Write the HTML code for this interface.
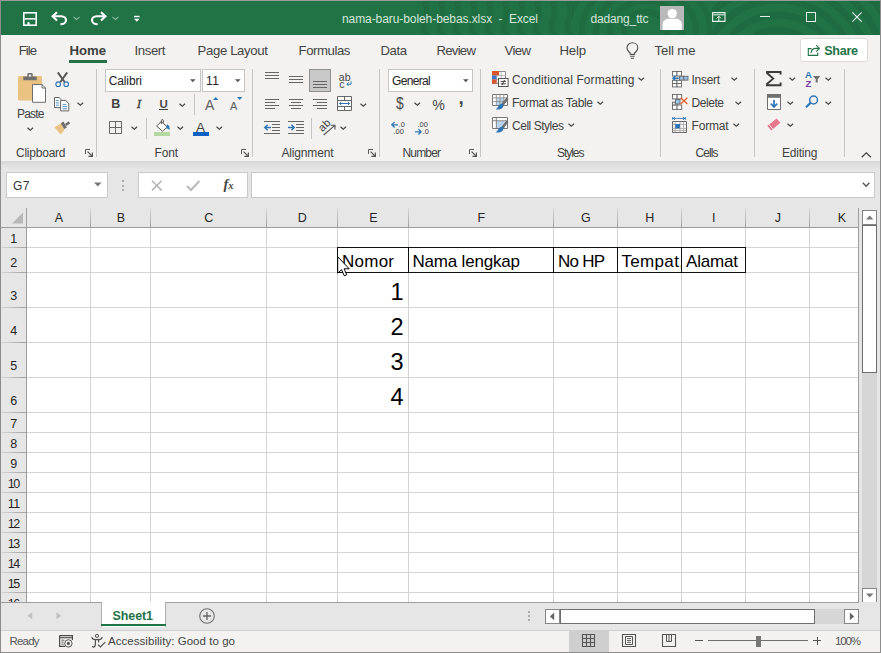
<!DOCTYPE html>
<html lang="en"><head><meta charset="utf-8"><title>nama-baru-boleh-bebas.xlsx - Excel</title>
<style>
html,body{margin:0;padding:0}
body{width:881px;height:653px;position:relative;overflow:hidden;background:#f3f2f1;font-family:"Liberation Sans",sans-serif}
.a{position:absolute;display:block;box-sizing:border-box}
.t{position:absolute;white-space:pre;line-height:1.149;display:block}
svg{overflow:visible}
</style></head><body>
<div class="a " style="left:0px;top:0px;width:881px;height:35px;background:#217346;"></div>
<div class="a " style="left:0px;top:35px;width:881px;height:126px;background:#f3f2f1;"></div>
<div class="a " style="left:0px;top:161px;width:881px;height:8px;background:linear-gradient(#d6d6d6,#dedede 40%,#e6e6e6)"></div>
<div class="a " style="left:0px;top:169px;width:881px;height:39px;background:#e6e6e6;"></div>
<div class="a " style="left:27px;top:228px;width:832px;height:374px;background:#fff;"></div>
<svg class="a" style="left:390px;top:1px;overflow:hidden" width="490" height="34" viewBox="390 1 490 34"><defs><clipPath id="cR"><rect x="712" y="0" width="170" height="36"/></clipPath><clipPath id="cM"><rect x="572" y="0" width="140" height="36"/></clipPath></defs><g clip-path="url(#cR)"><circle cx="778" cy="78" r="48" fill="none" stroke="#000" stroke-opacity="0.07" stroke-width="7"/><circle cx="778" cy="78" r="63" fill="none" stroke="#000" stroke-opacity="0.07" stroke-width="7"/><circle cx="778" cy="78" r="78" fill="none" stroke="#000" stroke-opacity="0.07" stroke-width="7"/><circle cx="778" cy="78" r="93" fill="none" stroke="#000" stroke-opacity="0.07" stroke-width="7"/><circle cx="778" cy="78" r="108" fill="none" stroke="#000" stroke-opacity="0.07" stroke-width="7"/><circle cx="778" cy="78" r="123" fill="none" stroke="#000" stroke-opacity="0.07" stroke-width="7"/><circle cx="778" cy="78" r="138" fill="none" stroke="#000" stroke-opacity="0.07" stroke-width="7"/></g><g clip-path="url(#cM)"><ellipse cx="646" cy="30" rx="22" ry="18" fill="none" stroke="#000" stroke-opacity="0.06" stroke-width="6"/><ellipse cx="646" cy="30" rx="36" ry="29" fill="none" stroke="#000" stroke-opacity="0.06" stroke-width="6"/><ellipse cx="646" cy="30" rx="50" ry="40" fill="none" stroke="#000" stroke-opacity="0.06" stroke-width="6"/><ellipse cx="646" cy="30" rx="64" ry="51" fill="none" stroke="#000" stroke-opacity="0.06" stroke-width="6"/><ellipse cx="646" cy="30" rx="78" ry="62" fill="none" stroke="#000" stroke-opacity="0.06" stroke-width="6"/><ellipse cx="646" cy="30" rx="92" ry="74" fill="none" stroke="#000" stroke-opacity="0.06" stroke-width="6"/><ellipse cx="646" cy="30" rx="106" ry="85" fill="none" stroke="#000" stroke-opacity="0.06" stroke-width="6"/></g><path d="M424 0Q429 12 425 20T427 36" fill="none" stroke="#000" stroke-opacity="0.06" stroke-width="6"/><path d="M440 0Q445 12 441 20T443 36" fill="none" stroke="#000" stroke-opacity="0.06" stroke-width="6"/><path d="M456 0Q461 12 457 20T459 36" fill="none" stroke="#000" stroke-opacity="0.06" stroke-width="6"/><path d="M472 0Q477 12 473 20T475 36" fill="none" stroke="#000" stroke-opacity="0.06" stroke-width="6"/><path d="M488 0Q493 12 489 20T491 36" fill="none" stroke="#000" stroke-opacity="0.06" stroke-width="6"/><path d="M504 0Q509 12 505 20T507 36" fill="none" stroke="#000" stroke-opacity="0.06" stroke-width="6"/><path d="M520 0Q525 12 521 20T523 36" fill="none" stroke="#000" stroke-opacity="0.06" stroke-width="6"/><path d="M536 0Q541 12 537 20T539 36" fill="none" stroke="#000" stroke-opacity="0.06" stroke-width="6"/><path d="M552 0Q557 12 553 20T555 36" fill="none" stroke="#000" stroke-opacity="0.06" stroke-width="6"/><path d="M568 0Q573 12 569 20T571 36" fill="none" stroke="#000" stroke-opacity="0.06" stroke-width="6"/></svg>
<svg class="a" style="left:23px;top:12px;" width="14" height="14" viewBox="0 0 14 14"><rect x="0.8" y="0.8" width="12.4" height="12.4" fill="none" stroke="#fff" stroke-width="1.6"/><rect x="1.5" y="6.1" width="11" height="1.5" fill="#fff"/><rect x="4.4" y="10.2" width="2.2" height="2.6" fill="#fff"/></svg>
<svg class="a" style="left:51px;top:11px;" width="17" height="15" viewBox="0 0 17 15"><path d="M6 1.2L1.6 5.3 6 9.4" fill="none" stroke="#fff" stroke-width="2.1"/><path d="M2 5.3H10.2C13.4 5.3 15 7.3 15 9.2 15 11.6 12.6 13.2 9.4 13.2" fill="none" stroke="#fff" stroke-width="2.1"/></svg>
<svg class="a" style="left:90px;top:11px;" width="17" height="15" viewBox="0 0 17 15"><path d="M11 1.2L15.4 5.3 11 9.4" fill="none" stroke="#fff" stroke-width="2.1"/><path d="M15 5.3H6.8C3.6 5.3 2 7.3 2 9.2 2 11.6 4.4 13.2 7.6 13.2" fill="none" stroke="#fff" stroke-width="2.1"/></svg>
<svg class="a" style="left:72.5px;top:15.6px;" width="7" height="4.8" viewBox="0 0 7 4.8"><path d="M0.5 0.8 L3.5 3.4 L6.5 0.8" fill="none" stroke="#8dbba2" stroke-width="1.1"/></svg>
<svg class="a" style="left:111.5px;top:15.6px;" width="7" height="4.8" viewBox="0 0 7 4.8"><path d="M0.5 0.8 L3.5 3.4 L6.5 0.8" fill="none" stroke="#8dbba2" stroke-width="1.1"/></svg>
<svg class="a" style="left:134px;top:15px;" width="6" height="7" viewBox="0 0 6 7"><path d="M0 1.5h5.6" stroke="#fff" stroke-width="1.4"/><path d="M0 3.8h5.6L2.8 6.8z" fill="#fff"/></svg>
<span class="t" style="left:342.00px;top:12px;line-height:14px;font-size:12px;color:#d3e6da;letter-spacing:-0.078px;">nama-baru-boleh-bebas.xlsx  -  Excel</span>
<span class="t" style="left:590.50px;top:12px;line-height:14px;font-size:12px;color:#d3e6da;letter-spacing:-0.153px;">dadang_ttc</span>
<svg class="a" style="left:660px;top:6px;" width="24" height="24" viewBox="0 0 24 24"><rect width="24" height="24" fill="#b9b9b9"/><circle cx="12.2" cy="7.6" r="4.7" fill="#fff"/><path d="M2.6 24V18.5C2.6 15 5.5 12.8 8 12.8H16.4C19 12.8 21.8 15 21.8 18.5V24z" fill="#fff"/></svg>
<svg class="a" style="left:712px;top:12px;" width="14" height="10" viewBox="0 0 14 10"><path d="M0.6 0.6H13V9.4H0.6z" fill="none" stroke="#e8f1ec" stroke-width="1.1"/><path d="M0.6 2.8H13" stroke="#e8f1ec" stroke-width="1"/><path d="M6.8 9V4.2M4.6 6.4L6.8 4.2 9 6.4" fill="none" stroke="#e8f1ec" stroke-width="1"/></svg>
<div class="a " style="left:760px;top:16px;width:10px;height:1px;background:#e4eee8;"></div>
<div class="a " style="left:806px;top:12px;width:10px;height:10px;border:1px solid #e4eee8"></div>
<svg class="a" style="left:852px;top:12px;" width="10" height="10" viewBox="0 0 10 10"><path d="M0.4 0.4L9.6 9.6M9.6 0.4L0.4 9.6" stroke="#e8f1ec" stroke-width="1.1"/></svg>
<span class="t" style="left:18.70px;top:43px;line-height:15px;font-size:13.2px;color:#444;letter-spacing:-0.989px;">File</span>
<span class="t" style="left:69.50px;top:43px;line-height:15px;font-size:13.2px;color:#404040;letter-spacing:-0.058px;font-weight:bold;">Home</span>
<div class="a " style="left:69px;top:60px;width:38px;height:3px;background:#217346;"></div>
<span class="t" style="left:134.50px;top:43px;line-height:15px;font-size:13.2px;color:#444;letter-spacing:-0.402px;">Insert</span>
<span class="t" style="left:197.50px;top:43px;line-height:15px;font-size:13.2px;color:#444;letter-spacing:-0.362px;">Page Layout</span>
<span class="t" style="left:298.50px;top:43px;line-height:15px;font-size:13.2px;color:#444;letter-spacing:-0.430px;">Formulas</span>
<span class="t" style="left:380.50px;top:43px;line-height:15px;font-size:13.2px;color:#444;letter-spacing:-0.460px;">Data</span>
<span class="t" style="left:436.50px;top:43px;line-height:15px;font-size:13.2px;color:#444;letter-spacing:-0.756px;">Review</span>
<span class="t" style="left:504.50px;top:43px;line-height:15px;font-size:13.2px;color:#444;letter-spacing:-0.624px;">View</span>
<span class="t" style="left:559.50px;top:43px;line-height:15px;font-size:13.2px;color:#444;letter-spacing:-0.216px;">Help</span>
<span class="t" style="left:654.50px;top:43px;line-height:15px;font-size:13.2px;color:#444;letter-spacing:-0.135px;">Tell me</span>
<svg class="a" style="left:626px;top:42px;" width="13" height="18" viewBox="0 0 13 18"><path d="M4.2 12.4V11C2.2 9.6 1 8 1 5.8 1 3 3.3 0.8 6.4 0.8S11.8 3 11.8 5.8C11.8 8 10.6 9.6 8.6 11V12.4z" fill="none" stroke="#555" stroke-width="1.1"/><path d="M4.2 14.3H8.6M4.8 16.3H8" stroke="#555" stroke-width="1.1"/></svg>
<div class="a " style="left:800px;top:38px;width:68px;height:24px;background:#fff;border:1px solid #dcdad8;border-radius:2.5px"></div>
<svg class="a" style="left:807px;top:44px;" width="14" height="13" viewBox="0 0 14 13"><path d="M4.6 4.6H1.3V11.4H10.7V8.4" fill="none" stroke="#217346" stroke-width="1.1"/><path d="M4 9C4.4 6 6.4 4.4 9 4.4H11.4M9.2 1.2L12.4 4.4 9.2 7.6" fill="none" stroke="#217346" stroke-width="1.1"/></svg>
<span class="t" style="left:824.30px;top:44px;line-height:14px;font-size:12.6px;color:#217346;letter-spacing:-0.330px;font-weight:bold;">Share</span>
<div class="a " style="left:96px;top:69px;width:1px;height:88px;background:#c8c6c4;"></div>
<div class="a " style="left:252px;top:69px;width:1px;height:88px;background:#c8c6c4;"></div>
<div class="a " style="left:379px;top:69px;width:1px;height:88px;background:#c8c6c4;"></div>
<div class="a " style="left:480px;top:69px;width:1px;height:88px;background:#c8c6c4;"></div>
<div class="a " style="left:660px;top:69px;width:1px;height:88px;background:#c8c6c4;"></div>
<div class="a " style="left:754px;top:69px;width:1px;height:88px;background:#c8c6c4;"></div>
<div class="a " style="left:844px;top:69px;width:1px;height:88px;background:#c8c6c4;"></div>
<svg class="a" style="left:18px;top:72px;" width="29" height="31" viewBox="0 0 29 31"><rect x="0" y="4" width="24" height="24.5" rx="1.2" fill="#eac282"/><path d="M5.3 8.2V4.6H9.3V2.4Q9.3 1 10.7 1H13.3Q14.7 1 14.7 2.4V4.6H18.7V8.2z" fill="#6e6e6e"/><rect x="10.8" y="2.6" width="2.4" height="2" fill="#f3f2f1"/><path d="M14.5 12.5H24L27.5 16V30.3H14.5z" fill="#fff" stroke="#6e6e6e" stroke-width="1"/><path d="M24 12.5V16H27.5" fill="none" stroke="#6e6e6e" stroke-width="1"/></svg>
<span class="t" style="left:17.00px;top:107px;line-height:14px;font-size:12px;color:#424242;letter-spacing:-0.846px;">Paste</span>
<svg class="a" style="left:26.7px;top:127.1px;" width="6.6" height="4.7" viewBox="0 0 6.6 4.7"><path d="M0.5 0.8 L3.3 3.3000000000000003 L6.1 0.8" fill="none" stroke="#444" stroke-width="1.15"/></svg>
<svg class="a" style="left:55px;top:72px;" width="15" height="16" viewBox="0 0 15 16"><path d="M2.8 0.4L9.6 10M12.2 0.4L5.4 10" stroke="#555" stroke-width="1.9" fill="none"/><circle cx="3.2" cy="12.2" r="2.3" fill="none" stroke="#2e75b6" stroke-width="1.1"/><circle cx="11.2" cy="12.2" r="2.3" fill="none" stroke="#2e75b6" stroke-width="1.1"/></svg>
<svg class="a" style="left:54px;top:97px;" width="16" height="15" viewBox="0 0 16 15"><path d="M0.5 0.5H5L7.6 3V10.6H0.5z" fill="#fff" stroke="#666" stroke-width="1"/><path d="M6.6 3.4H11.6L14.8 6.4V13.9H6.6z" fill="#fff" stroke="#666" stroke-width="1"/><path d="M2 3.6H4.8M2 5.9H5.2M2 8.2H5.2M8.6 7.4H12.2M8.6 9.6H13M8.6 11.8H13" stroke="#2e75b6" stroke-width="0.8"/></svg>
<svg class="a" style="left:76.5px;top:102.3px;" width="6.6" height="4.7" viewBox="0 0 6.6 4.7"><path d="M0.5 0.8 L3.3 3.3000000000000003 L6.1 0.8" fill="none" stroke="#444" stroke-width="1.15"/></svg>
<svg class="a" style="left:54px;top:120px;" width="17" height="15" viewBox="0 0 17 15"><path d="M0.4 7.2L7 3.6 10.6 9.8 6.6 14.6z" fill="#eac282"/><path d="M6.8 3.2L9.4 1.6 12.8 7.4 10.2 9z" fill="#6e6e6e"/><path d="M11 4L14.6 1.2 16.2 3.4 12.2 6z" fill="#6e6e6e"/></svg>
<span class="t" style="left:16.00px;top:146px;line-height:14px;font-size:12px;color:#424242;letter-spacing:-0.232px;">Clipboard</span>
<svg class="a" style="left:85px;top:149px;" width="8" height="8" viewBox="0 0 8 8"><path d="M0.5 5V0.5H5" fill="none" stroke="#5a5a5a" stroke-width="1"/><path d="M2.6 2.6L7 7M7.4 3.4V7.4H3.4" fill="none" stroke="#555" stroke-width="1.15"/></svg>
<div class="a " style="left:105px;top:69px;width:96px;height:23px;background:#fff;border:1px solid #c6c6c6"></div>
<span class="t" style="left:108.70px;top:74px;line-height:14px;font-size:12px;color:#222;letter-spacing:-0.118px;">Calibri</span>
<svg class="a" style="left:190px;top:79px;" width="6" height="4" viewBox="0 0 6 4"><path d="M0 0.3h5.6L2.8 3.2z" fill="#555"/></svg>
<div class="a " style="left:202px;top:69px;width:43px;height:23px;background:#fff;border:1px solid #c6c6c6"></div>
<span class="t" style="left:206.00px;top:74px;line-height:14px;font-size:12px;color:#222;letter-spacing:0.544px;">11</span>
<svg class="a" style="left:235px;top:79px;" width="6" height="4" viewBox="0 0 6 4"><path d="M0 0.3h5.6L2.8 3.2z" fill="#555"/></svg>
<span class="t" style="left:111.20px;top:97px;line-height:14px;font-size:12.5px;color:#424242;letter-spacing:0.000px;font-weight:bold;">B</span>
<span class="t" style="left:136.80px;top:96px;line-height:15px;font-size:13px;color:#424242;letter-spacing:0.000px;font-style:italic;font-family:'Liberation Serif',serif;-webkit-text-stroke:0.3px #3b3b3b;">I</span>
<span class="t" style="left:159.40px;top:98px;line-height:12px;font-size:11.5px;color:#4a4a4a;letter-spacing:0.000px;font-weight:bold;">U</span>
<div class="a " style="left:159px;top:109px;width:9px;height:1px;background:#424242;"></div>
<svg class="a" style="left:178.8px;top:102.5px;" width="6.6" height="4.7" viewBox="0 0 6.6 4.7"><path d="M0.5 0.8 L3.3 3.3000000000000003 L6.1 0.8" fill="none" stroke="#444" stroke-width="1.15"/></svg>
<div class="a " style="left:194px;top:94px;width:1px;height:21px;background:#c8c6c4;"></div>
<span class="t" style="left:205.00px;top:97px;line-height:16px;font-size:14px;color:#5e5e5e;letter-spacing:0.000px;">A</span>
<svg class="a" style="left:213px;top:97px;" width="6" height="3" viewBox="0 0 6 3"><path d="M0 3h5.4L2.7 0z" fill="#2e75b6"/></svg>
<span class="t" style="left:230.00px;top:100px;line-height:12px;font-size:11px;color:#5e5e5e;letter-spacing:0.000px;">A</span>
<svg class="a" style="left:237px;top:97px;" width="6" height="3" viewBox="0 0 6 3"><path d="M0 0h5.4L2.7 3z" fill="#2e75b6"/></svg>
<svg class="a" style="left:109px;top:121px;" width="14" height="14" viewBox="0 0 14 14"><path d="M0.5 0.5H12.5V12.5H0.5zM6.5 0.5V12.5M0.5 6.5H12.5" fill="none" stroke="#666" stroke-width="1"/></svg>
<svg class="a" style="left:130.7px;top:126.3px;" width="6.6" height="4.7" viewBox="0 0 6.6 4.7"><path d="M0.5 0.8 L3.3 3.3000000000000003 L6.1 0.8" fill="none" stroke="#444" stroke-width="1.15"/></svg>
<div class="a " style="left:146px;top:118px;width:1px;height:21px;background:#c8c6c4;"></div>
<svg class="a" style="left:155px;top:119px;" width="17" height="14" viewBox="0 0 17 14"><path d="M6.2 2.6L12.4 8 7.4 12.2 1.6 7z" fill="#fff" stroke="#555" stroke-width="1"/><path d="M6.4 5V1.6Q6.4 0.6 7.4 0.6 8.4 0.6 8.4 1.6V3.8" fill="none" stroke="#555" stroke-width="1"/><path d="M12.2 5.2Q15.2 7 14.6 11 12.6 9 11 9.2z" fill="#2e75b6"/></svg>
<div class="a " style="left:154px;top:132px;width:16px;height:4px;background:#b5d7a0;"></div>
<svg class="a" style="left:176.6px;top:126.3px;" width="6.6" height="4.7" viewBox="0 0 6.6 4.7"><path d="M0.5 0.8 L3.3 3.3000000000000003 L6.1 0.8" fill="none" stroke="#444" stroke-width="1.15"/></svg>
<span class="t" style="left:196.00px;top:120px;line-height:15px;font-size:13.6px;color:#444;letter-spacing:0.000px;">A</span>
<div class="a " style="left:193px;top:132px;width:16px;height:4px;background:#0b62c4;"></div>
<svg class="a" style="left:215.6px;top:126.3px;" width="6.6" height="4.7" viewBox="0 0 6.6 4.7"><path d="M0.5 0.8 L3.3 3.3000000000000003 L6.1 0.8" fill="none" stroke="#444" stroke-width="1.15"/></svg>
<span class="t" style="left:154.50px;top:146px;line-height:14px;font-size:12px;color:#424242;letter-spacing:-0.170px;">Font</span>
<svg class="a" style="left:241px;top:149px;" width="8" height="8" viewBox="0 0 8 8"><path d="M0.5 5V0.5H5" fill="none" stroke="#5a5a5a" stroke-width="1"/><path d="M2.6 2.6L7 7M7.4 3.4V7.4H3.4" fill="none" stroke="#555" stroke-width="1.15"/></svg>
<div class="a " style="left:265px;top:72px;width:14px;height:1px;background:#666;"></div>
<div class="a " style="left:265px;top:75px;width:14px;height:1px;background:#666;"></div>
<div class="a " style="left:265px;top:78px;width:14px;height:1px;background:#666;"></div>
<div class="a " style="left:289px;top:76px;width:14px;height:1px;background:#666;"></div>
<div class="a " style="left:289px;top:79px;width:14px;height:1px;background:#666;"></div>
<div class="a " style="left:289px;top:82px;width:14px;height:1px;background:#666;"></div>
<div class="a " style="left:309px;top:69px;width:22px;height:23px;background:#c8c8c8;border:1px solid #8f8f8f"></div>
<div class="a " style="left:313px;top:81px;width:14px;height:1px;background:#666;"></div>
<div class="a " style="left:313px;top:84px;width:14px;height:1px;background:#666;"></div>
<div class="a " style="left:313px;top:87px;width:14px;height:1px;background:#666;"></div>
<span class="t" style="left:338.80px;top:71px;line-height:12px;font-size:10.5px;color:#424242;letter-spacing:0.122px;">ab</span>
<span class="t" style="left:339.20px;top:78px;line-height:12px;font-size:10.5px;color:#424242;letter-spacing:0.000px;">c</span>
<svg class="a" style="left:346px;top:81px;" width="6" height="6" viewBox="0 0 6 6"><path d="M5 0.3V3.2H1M2.6 1.4L0.8 3.2 2.6 5" fill="none" stroke="#2e75b6" stroke-width="1"/></svg>
<div class="a " style="left:265px;top:99px;width:14px;height:1px;background:#666;"></div>
<div class="a " style="left:265px;top:102px;width:10px;height:1px;background:#666;"></div>
<div class="a " style="left:265px;top:105px;width:14px;height:1px;background:#666;"></div>
<div class="a " style="left:265px;top:108px;width:10px;height:1px;background:#666;"></div>
<div class="a " style="left:289.0px;top:99px;width:14px;height:1px;background:#666;"></div>
<div class="a " style="left:291.0px;top:102px;width:10px;height:1px;background:#666;"></div>
<div class="a " style="left:289.0px;top:105px;width:14px;height:1px;background:#666;"></div>
<div class="a " style="left:291.0px;top:108px;width:10px;height:1px;background:#666;"></div>
<div class="a " style="left:313px;top:99px;width:14px;height:1px;background:#666;"></div>
<div class="a " style="left:317px;top:102px;width:10px;height:1px;background:#666;"></div>
<div class="a " style="left:313px;top:105px;width:14px;height:1px;background:#666;"></div>
<div class="a " style="left:317px;top:108px;width:10px;height:1px;background:#666;"></div>
<svg class="a" style="left:337px;top:96px;" width="16" height="15" viewBox="0 0 16 15"><path d="M0.5 0.5H14.5V14.5H0.5z" fill="#fff" stroke="#666" stroke-width="1"/><path d="M0.5 4.5H14.5M0.5 10.5H14.5M7.5 0.5V4.5M7.5 10.5V14.5" fill="none" stroke="#666" stroke-width="1"/><path d="M2.4 7.5H12.6M4.2 5.8L2.4 7.5 4.2 9.2M10.8 5.8L12.6 7.5 10.8 9.2" fill="none" stroke="#2e75b6" stroke-width="1"/></svg>
<svg class="a" style="left:359.5px;top:102.5px;" width="6.6" height="4.7" viewBox="0 0 6.6 4.7"><path d="M0.5 0.8 L3.3 3.3000000000000003 L6.1 0.8" fill="none" stroke="#444" stroke-width="1.15"/></svg>
<div class="a " style="left:264px;top:121px;width:16px;height:1px;background:#666;"></div>
<div class="a " style="left:264px;top:133px;width:16px;height:1px;background:#666;"></div>
<div class="a " style="left:272px;top:124px;width:8px;height:1px;background:#666;"></div>
<div class="a " style="left:272px;top:127px;width:8px;height:1px;background:#666;"></div>
<div class="a " style="left:272px;top:130px;width:8px;height:1px;background:#666;"></div>
<svg class="a" style="left:264px;top:124px;" width="7" height="7" viewBox="0 0 7 7"><path d="M7 3.5H1M3.6 0.8L0.8 3.5 3.6 6.2" fill="none" stroke="#2e75b6" stroke-width="1.5"/></svg>
<div class="a " style="left:288px;top:121px;width:16px;height:1px;background:#666;"></div>
<div class="a " style="left:288px;top:133px;width:16px;height:1px;background:#666;"></div>
<div class="a " style="left:296px;top:124px;width:8px;height:1px;background:#666;"></div>
<div class="a " style="left:296px;top:127px;width:8px;height:1px;background:#666;"></div>
<div class="a " style="left:296px;top:130px;width:8px;height:1px;background:#666;"></div>
<svg class="a" style="left:288px;top:124px;" width="7" height="7" viewBox="0 0 7 7"><path d="M0 3.5H6M3.4 0.8L6.2 3.5 3.4 6.2" fill="none" stroke="#2e75b6" stroke-width="1.5"/></svg>
<div class="a " style="left:311px;top:118px;width:1px;height:21px;background:#c8c6c4;"></div>
<span class="t" style="left:317.5px;top:118.5px;font-size:11px;line-height:12px;color:#3b3b3b;transform:rotate(-45deg);transform-origin:50% 50%">ab</span>
<svg class="a" style="left:323px;top:124px;" width="13" height="12" viewBox="0 0 13 12"><path d="M0.6 11L11.6 1.6M7.6 1.2H12V5.4" fill="none" stroke="#555" stroke-width="1.1"/></svg>
<svg class="a" style="left:339.6px;top:126.3px;" width="6.6" height="4.7" viewBox="0 0 6.6 4.7"><path d="M0.5 0.8 L3.3 3.3000000000000003 L6.1 0.8" fill="none" stroke="#444" stroke-width="1.15"/></svg>
<span class="t" style="left:281.50px;top:146px;line-height:14px;font-size:12px;color:#424242;letter-spacing:-0.170px;">Alignment</span>
<svg class="a" style="left:368px;top:149px;" width="8" height="8" viewBox="0 0 8 8"><path d="M0.5 5V0.5H5" fill="none" stroke="#5a5a5a" stroke-width="1"/><path d="M2.6 2.6L7 7M7.4 3.4V7.4H3.4" fill="none" stroke="#555" stroke-width="1.15"/></svg>
<div class="a " style="left:388px;top:69px;width:85px;height:23px;background:#fff;border:1px solid #c6c6c6"></div>
<span class="t" style="left:392.00px;top:74px;line-height:14px;font-size:12px;color:#222;letter-spacing:-0.681px;">General</span>
<svg class="a" style="left:463px;top:79px;" width="6" height="4" viewBox="0 0 6 4"><path d="M0 0.3h5.6L2.8 3.2z" fill="#555"/></svg>
<span class="t" style="left:395.80px;top:95px;line-height:17px;font-size:15px;color:#4a4a4a;letter-spacing:0.000px;transform:scale(0.93,1.16);transform-origin:0 70%;">$</span>
<svg class="a" style="left:413.6px;top:102.2px;" width="6.6" height="4.7" viewBox="0 0 6.6 4.7"><path d="M0.5 0.8 L3.3 3.3000000000000003 L6.1 0.8" fill="none" stroke="#444" stroke-width="1.15"/></svg>
<span class="t" style="left:432.20px;top:97px;line-height:16px;font-size:14.2px;color:#4a4a4a;letter-spacing:0.000px;">%</span>
<span class="t" style="left:458.40px;top:87px;line-height:21px;font-size:19px;color:#4a4a4a;letter-spacing:0.000px;font-weight:bold;">,</span>
<svg class="a" style="left:391px;top:121px;" width="7" height="7" viewBox="0 0 7 7"><path d="M7 3.8H1M3.6 1.1L0.8 3.8 3.6 6.5" fill="none" stroke="#2e75b6" stroke-width="1.3"/></svg>
<span class="t" style="left:398.60px;top:120px;line-height:9px;font-size:7.5px;color:#424242;letter-spacing:0.000px;">.0</span>
<span class="t" style="left:393.40px;top:127px;line-height:9px;font-size:7.5px;color:#424242;letter-spacing:0.000px;">.00</span>
<span class="t" style="left:417.40px;top:120px;line-height:9px;font-size:7.5px;color:#424242;letter-spacing:0.000px;">.00</span>
<svg class="a" style="left:415px;top:128px;" width="7" height="7" viewBox="0 0 7 7"><path d="M0 3.8H6M3.4 1.1L6.2 3.8 3.4 6.5" fill="none" stroke="#2e75b6" stroke-width="1.3"/></svg>
<span class="t" style="left:422.60px;top:127px;line-height:9px;font-size:7.5px;color:#424242;letter-spacing:0.000px;">.0</span>
<span class="t" style="left:402.50px;top:146px;line-height:14px;font-size:12px;color:#424242;letter-spacing:-0.835px;">Number</span>
<svg class="a" style="left:469px;top:149px;" width="8" height="8" viewBox="0 0 8 8"><path d="M0.5 5V0.5H5" fill="none" stroke="#5a5a5a" stroke-width="1"/><path d="M2.6 2.6L7 7M7.4 3.4V7.4H3.4" fill="none" stroke="#555" stroke-width="1.15"/></svg>
<svg class="a" style="left:492px;top:71px;" width="17" height="16" viewBox="0 0 17 16"><path d="M0.5 0.5H13.5V12.5H0.5z" fill="#fff" stroke="#8a8a8a" stroke-width="1"/><path d="M0.5 4.5H13.5M0.5 8.5H13.5M4.8 0.5V12.5M9.2 0.5V12.5" stroke="#a8a8a8" stroke-width="0.8" fill="none"/><rect x="0" y="0" width="7" height="4.3" fill="#d9562f"/><rect x="0" y="4.6" width="4.6" height="3.7" fill="#4472c4"/><rect x="0" y="8.6" width="4.6" height="4" fill="#d9562f"/><rect x="6.5" y="7.5" width="9.6" height="8" fill="#fff" stroke="#555" stroke-width="1"/><path d="M8.6 10.4H14M8.6 12.8H14M12.6 9L10 14.2" stroke="#333" stroke-width="0.9" fill="none"/></svg>
<span class="t" style="left:512.00px;top:73px;line-height:14px;font-size:12px;color:#424242;letter-spacing:0.085px;">Conditional Formatting</span>
<svg class="a" style="left:638.2px;top:77.2px;" width="6.6" height="4.7" viewBox="0 0 6.6 4.7"><path d="M0.5 0.8 L3.3 3.3000000000000003 L6.1 0.8" fill="none" stroke="#444" stroke-width="1.15"/></svg>
<svg class="a" style="left:492px;top:94px;" width="17" height="16" viewBox="0 0 17 16"><path d="M0.5 0.5H15.5V11.5H0.5z" fill="#fff" stroke="#777" stroke-width="1"/><rect x="4.5" y="4" width="7.4" height="7" fill="#bcd3ec"/><path d="M0.5 3.8H15.5M0.5 7.6H15.5M4.3 0.5V11.5M8 0.5V11.5M11.8 0.5V11.5" stroke="#888" stroke-width="0.8" fill="none"/><path d="M8.6 11L14.4 3.4 16.4 5 10.8 12.4z" fill="#6e6e6e"/><path d="M10.6 10Q8.2 9.4 6.8 11.6 5.8 13.8 3.6 15.4 8.2 16 10.4 14 11.8 12.4 11.4 10.8z" fill="#2e75b6"/><path d="M0 11.5H6.5" stroke="#f3f2f1" stroke-width="0"/></svg>
<svg class="a" style="left:492px;top:117px;" width="17" height="16" viewBox="0 0 17 16"><path d="M0.5 0.5H15.5V11.5H0.5z" fill="#fff" stroke="#777" stroke-width="1"/><rect x="4.5" y="4" width="8" height="7" fill="#bcd3ec"/><path d="M0.5 3.8H15.5M4.3 0.5V11.5" stroke="#777" stroke-width="0.9" fill="none"/><path d="M8.6 11L14.4 3.4 16.4 5 10.8 12.4z" fill="#6e6e6e"/><path d="M10.6 10Q8.2 9.4 6.8 11.6 5.8 13.8 3.6 15.4 8.2 16 10.4 14 11.8 12.4 11.4 10.8z" fill="#2e75b6"/><path d="M0 11.5H6.5" stroke="#f3f2f1" stroke-width="0"/></svg>
<span class="t" style="left:512.00px;top:96px;line-height:14px;font-size:12px;color:#424242;letter-spacing:-0.344px;">Format as Table</span>
<svg class="a" style="left:596.6px;top:100.5px;" width="6.6" height="4.7" viewBox="0 0 6.6 4.7"><path d="M0.5 0.8 L3.3 3.3000000000000003 L6.1 0.8" fill="none" stroke="#444" stroke-width="1.15"/></svg>
<span class="t" style="left:512.00px;top:119px;line-height:14px;font-size:12px;color:#424242;letter-spacing:-0.468px;">Cell Styles</span>
<svg class="a" style="left:568px;top:123.3px;" width="6.6" height="4.7" viewBox="0 0 6.6 4.7"><path d="M0.5 0.8 L3.3 3.3000000000000003 L6.1 0.8" fill="none" stroke="#444" stroke-width="1.15"/></svg>
<span class="t" style="left:557.00px;top:146px;line-height:14px;font-size:12px;color:#424242;letter-spacing:-1.036px;">Styles</span>
<svg class="a" style="left:672px;top:71px;" width="17" height="16" viewBox="0 0 17 16"><rect x="0.5" y="0.5" width="4.5" height="4.5" fill="#fff" stroke="#666" stroke-width="0.9"/><rect x="5" y="0.5" width="4.5" height="4.5" fill="#fff" stroke="#666" stroke-width="0.9"/><rect x="0.5" y="9.3" width="4.5" height="3.3" fill="#fff" stroke="#666" stroke-width="0.9"/><rect x="5" y="9.3" width="4.5" height="3.3" fill="#fff" stroke="#666" stroke-width="0.9"/><rect x="0.5" y="12.6" width="4.5" height="3.3" fill="#fff" stroke="#666" stroke-width="0.9"/><rect x="5" y="12.6" width="4.5" height="3.3" fill="#fff" stroke="#666" stroke-width="0.9"/><rect x="7.6" y="5.3" width="4.2" height="3.8" fill="#9dc3e6" stroke="#666" stroke-width="0.9"/><rect x="11.8" y="5.3" width="4.2" height="3.8" fill="#9dc3e6" stroke="#666" stroke-width="0.9"/><path d="M6.8 7.2H1.2M3.4 4.9L1 7.2 3.4 9.5" fill="none" stroke="#2e75b6" stroke-width="1.4"/></svg>
<span class="t" style="left:691.60px;top:73px;line-height:14px;font-size:12px;color:#424242;letter-spacing:-0.322px;">Insert</span>
<svg class="a" style="left:730.8px;top:77.2px;" width="6.6" height="4.7" viewBox="0 0 6.6 4.7"><path d="M0.5 0.8 L3.3 3.3000000000000003 L6.1 0.8" fill="none" stroke="#444" stroke-width="1.15"/></svg>
<svg class="a" style="left:672px;top:94px;" width="17" height="16" viewBox="0 0 17 16"><rect x="0.5" y="0.5" width="4.6" height="4.4" fill="#fff" stroke="#666" stroke-width="0.9"/><rect x="5.1" y="0.5" width="4.6" height="4.4" fill="#fff" stroke="#666" stroke-width="0.9"/><rect x="3.4" y="5.6" width="4.6" height="4.4" fill="#9dc3e6" stroke="#666" stroke-width="0.9"/><rect x="0.5" y="11" width="4.6" height="4.4" fill="#fff" stroke="#666" stroke-width="0.9"/><rect x="5.1" y="11" width="4.6" height="4.4" fill="#fff" stroke="#666" stroke-width="0.9"/><rect x="0.5" y="8.2" width="2.6" height="2.8" fill="#fff" stroke="#666" stroke-width="0.9"/><path d="M8.6 3.8L15.4 10M15.4 3.8L8.6 10" stroke="#e0632c" stroke-width="1.3" fill="none"/></svg>
<span class="t" style="left:691.60px;top:96px;line-height:14px;font-size:12px;color:#424242;letter-spacing:-0.457px;">Delete</span>
<svg class="a" style="left:734.5px;top:100.5px;" width="6.6" height="4.7" viewBox="0 0 6.6 4.7"><path d="M0.5 0.8 L3.3 3.3000000000000003 L6.1 0.8" fill="none" stroke="#444" stroke-width="1.15"/></svg>
<svg class="a" style="left:672px;top:117px;" width="16" height="17" viewBox="0 0 16 17"><path d="M0.5 2.6V0.2M13.5 2.6V0.2M1.4 1.4H12.6M3 0L1.2 1.4 3 2.8M11 0L12.8 1.4 11 2.8" fill="none" stroke="#2e75b6" stroke-width="0.9"/><path d="M0.5 4.5H14.5V15.5H0.5z" fill="#fff" stroke="#666" stroke-width="1"/><path d="M0.5 7.4H14.5M0.5 11.4H14.5M0.5 13.6H14.5M3.2 4.5V15.5M8 4.5V15.5M11.4 4.5V15.5" stroke="#9a9a9a" stroke-width="0.8" fill="none"/><rect x="3.2" y="7" width="4.8" height="4.4" fill="#2e75b6"/></svg>
<span class="t" style="left:691.60px;top:119px;line-height:14px;font-size:12px;color:#424242;letter-spacing:-0.200px;">Format</span>
<svg class="a" style="left:732.9px;top:123.3px;" width="6.6" height="4.7" viewBox="0 0 6.6 4.7"><path d="M0.5 0.8 L3.3 3.3000000000000003 L6.1 0.8" fill="none" stroke="#444" stroke-width="1.15"/></svg>
<span class="t" style="left:695.50px;top:146px;line-height:14px;font-size:12px;color:#424242;letter-spacing:-0.943px;">Cells</span>
<svg class="a" style="left:766px;top:71px;" width="16" height="16" viewBox="0 0 16 16"><path d="M14.6 3.6V1H1V2L7.2 7.6 1 13V14.2H14.6V11.6" fill="none" stroke="#3b3b3b" stroke-width="1.9" stroke-linejoin="miter"/></svg>
<svg class="a" style="left:788.5px;top:77.2px;" width="6.6" height="4.7" viewBox="0 0 6.6 4.7"><path d="M0.5 0.8 L3.3 3.3000000000000003 L6.1 0.8" fill="none" stroke="#444" stroke-width="1.15"/></svg>
<span class="t" style="left:805.00px;top:69px;line-height:11px;font-size:9.5px;color:#2e75b6;letter-spacing:0.000px;font-weight:bold;">A</span>
<span class="t" style="left:805.40px;top:78px;line-height:11px;font-size:9.5px;color:#7a3aa6;letter-spacing:0.000px;font-weight:bold;">Z</span>
<svg class="a" style="left:813px;top:76px;" width="8" height="7" viewBox="0 0 8 7"><path d="M0 0H7.4L4.7 3V6.6H2.7V3z" fill="#6e6e6e"/></svg>
<svg class="a" style="left:824.6px;top:77.2px;" width="6.6" height="4.7" viewBox="0 0 6.6 4.7"><path d="M0.5 0.8 L3.3 3.3000000000000003 L6.1 0.8" fill="none" stroke="#444" stroke-width="1.15"/></svg>
<svg class="a" style="left:767px;top:94px;" width="15" height="17" viewBox="0 0 15 17"><path d="M0.5 0.5H13.5V15.5H0.5z" fill="#fff" stroke="#6e6e6e" stroke-width="1"/><rect x="0" y="0" width="14" height="3.8" fill="#6e6e6e"/><path d="M7 6V13M3.8 9.6L7 13 10.2 9.6" fill="none" stroke="#2e75b6" stroke-width="1.7"/></svg>
<svg class="a" style="left:786.6px;top:100.5px;" width="6.6" height="4.7" viewBox="0 0 6.6 4.7"><path d="M0.5 0.8 L3.3 3.3000000000000003 L6.1 0.8" fill="none" stroke="#444" stroke-width="1.15"/></svg>
<svg class="a" style="left:805px;top:95px;" width="15" height="14" viewBox="0 0 15 14"><circle cx="8.6" cy="5" r="3.9" fill="none" stroke="#2e75b6" stroke-width="1.5"/><path d="M5.6 7.8L1 12.2" stroke="#2e75b6" stroke-width="2.2" fill="none"/></svg>
<svg class="a" style="left:824.6px;top:100.5px;" width="6.6" height="4.7" viewBox="0 0 6.6 4.7"><path d="M0.5 0.8 L3.3 3.3000000000000003 L6.1 0.8" fill="none" stroke="#444" stroke-width="1.15"/></svg>
<svg class="a" style="left:767px;top:118px;" width="14" height="13" viewBox="0 0 14 13"><path d="M0.4 8L9.6 0.4 13.4 4.8 4.2 12.4z" fill="#e8798c"/><path d="M2 6.6L5.8 11" stroke="#f8e4e8" stroke-width="0.9"/></svg>
<svg class="a" style="left:786.6px;top:123.3px;" width="6.6" height="4.7" viewBox="0 0 6.6 4.7"><path d="M0.5 0.8 L3.3 3.3000000000000003 L6.1 0.8" fill="none" stroke="#444" stroke-width="1.15"/></svg>
<span class="t" style="left:782.00px;top:146px;line-height:14px;font-size:12px;color:#424242;letter-spacing:-0.215px;">Editing</span>
<svg class="a" style="left:861.3px;top:152.1px;" width="11" height="7" viewBox="0 0 11 7"><path d="M0.7 5.3L5.3 0.9 9.9 5.3" fill="none" stroke="#444" stroke-width="1.3"/></svg>
<div class="a " style="left:6px;top:172px;width:102px;height:26px;background:#fff;border:1px solid #c9c9c9"></div>
<span class="t" style="left:13.00px;top:179px;line-height:14px;font-size:12px;color:#333;letter-spacing:0.493px;">G7</span>
<svg class="a" style="left:94px;top:182px;" width="8" height="5" viewBox="0 0 8 5"><path d="M0 0.5h7.6L3.8 4.6z" fill="#777"/></svg>
<div class="a " style="left:122px;top:180px;width:2px;height:2px;background:#ababab;"></div>
<div class="a " style="left:122px;top:184.5px;width:2px;height:2px;background:#ababab;"></div>
<div class="a " style="left:122px;top:189px;width:2px;height:2px;background:#ababab;"></div>
<div class="a " style="left:138px;top:172px;width:110px;height:26px;background:#fff;border:1px solid #c9c9c9"></div>
<svg class="a" style="left:151px;top:180px;" width="12" height="11" viewBox="0 0 12 11"><path d="M1 0.8l9.6 9.6M10.6 0.8L1 10.4" stroke="#b4b4b4" stroke-width="1.5" fill="none"/></svg>
<svg class="a" style="left:186px;top:180px;" width="15" height="11" viewBox="0 0 15 11"><path d="M1 6l4 4L13.4 1" stroke="#b9b9b9" stroke-width="2" fill="none"/></svg>
<span class="t" style="left:223.50px;top:176px;line-height:16px;font-size:14.5px;color:#444;letter-spacing:0.000px;font-weight:bold;font-style:italic;font-family:'Liberation Serif',serif;">f</span>
<span class="t" style="left:228.20px;top:180px;line-height:11px;font-size:10.5px;color:#444;letter-spacing:0.000px;font-weight:bold;font-style:italic;font-family:'Liberation Serif',serif;">x</span>
<div class="a " style="left:251px;top:172px;width:624px;height:26px;background:#fff;border:1px solid #c9c9c9"></div>
<svg class="a" style="left:862.4px;top:182px;" width="9" height="6" viewBox="0 0 9 6"><path d="M0.8 0.8l3.3 3.4 3.3-3.4" stroke="#555" stroke-width="1.4" fill="none"/></svg>
<div class="a " style="left:1px;top:208px;width:858px;height:20px;background:#e6e6e6;"></div>
<div class="a " style="left:1px;top:227px;width:858px;height:1px;background:#9d9d9d;"></div>
<div class="a " style="left:1px;top:228px;width:26px;height:374px;background:#e6e6e6;"></div>
<div class="a " style="left:26px;top:208px;width:1px;height:394px;background:#9d9d9d;"></div>
<svg class="a" style="left:11px;top:212px;" width="13" height="12" viewBox="0 0 13 12"><path d="M12 0.5V11.5H1z" fill="#b7b7b7"/></svg>
<span class="t" style="left:54.63px;top:211px;line-height:14px;font-size:12.5px;color:#262626;letter-spacing:0.000px;">A</span>
<span class="t" style="left:116.63px;top:211px;line-height:14px;font-size:12.5px;color:#262626;letter-spacing:0.000px;">B</span>
<span class="t" style="left:204.29px;top:211px;line-height:14px;font-size:12.5px;color:#262626;letter-spacing:0.000px;">C</span>
<span class="t" style="left:297.79px;top:211px;line-height:14px;font-size:12.5px;color:#262626;letter-spacing:0.000px;">D</span>
<span class="t" style="left:369.13px;top:211px;line-height:14px;font-size:12.5px;color:#262626;letter-spacing:0.000px;">E</span>
<span class="t" style="left:477.48px;top:211px;line-height:14px;font-size:12.5px;color:#262626;letter-spacing:0.000px;">F</span>
<span class="t" style="left:580.94px;top:211px;line-height:14px;font-size:12.5px;color:#262626;letter-spacing:0.000px;">G</span>
<span class="t" style="left:645.29px;top:211px;line-height:14px;font-size:12.5px;color:#262626;letter-spacing:0.000px;">H</span>
<span class="t" style="left:712.06px;top:211px;line-height:14px;font-size:12.5px;color:#262626;letter-spacing:0.000px;">I</span>
<span class="t" style="left:774.67px;top:211px;line-height:14px;font-size:12.5px;color:#262626;letter-spacing:0.000px;">J</span>
<span class="t" style="left:837.83px;top:211px;line-height:14px;font-size:12.5px;color:#262626;letter-spacing:0.000px;">K</span>
<div class="a " style="left:90px;top:208px;width:1px;height:19px;background:linear-gradient(#dadada,#a0a0a0)"></div>
<div class="a " style="left:90px;top:228px;width:1px;height:374px;background:#d4d4d4;"></div>
<div class="a " style="left:150px;top:208px;width:1px;height:19px;background:linear-gradient(#dadada,#a0a0a0)"></div>
<div class="a " style="left:150px;top:228px;width:1px;height:374px;background:#d4d4d4;"></div>
<div class="a " style="left:266px;top:208px;width:1px;height:19px;background:linear-gradient(#dadada,#a0a0a0)"></div>
<div class="a " style="left:266px;top:228px;width:1px;height:374px;background:#d4d4d4;"></div>
<div class="a " style="left:337px;top:208px;width:1px;height:19px;background:linear-gradient(#dadada,#a0a0a0)"></div>
<div class="a " style="left:337px;top:228px;width:1px;height:374px;background:#d4d4d4;"></div>
<div class="a " style="left:408px;top:208px;width:1px;height:19px;background:linear-gradient(#dadada,#a0a0a0)"></div>
<div class="a " style="left:408px;top:228px;width:1px;height:374px;background:#d4d4d4;"></div>
<div class="a " style="left:553px;top:208px;width:1px;height:19px;background:linear-gradient(#dadada,#a0a0a0)"></div>
<div class="a " style="left:553px;top:228px;width:1px;height:374px;background:#d4d4d4;"></div>
<div class="a " style="left:617px;top:208px;width:1px;height:19px;background:linear-gradient(#dadada,#a0a0a0)"></div>
<div class="a " style="left:617px;top:228px;width:1px;height:374px;background:#d4d4d4;"></div>
<div class="a " style="left:681px;top:208px;width:1px;height:19px;background:linear-gradient(#dadada,#a0a0a0)"></div>
<div class="a " style="left:681px;top:228px;width:1px;height:374px;background:#d4d4d4;"></div>
<div class="a " style="left:745px;top:208px;width:1px;height:19px;background:linear-gradient(#dadada,#a0a0a0)"></div>
<div class="a " style="left:745px;top:228px;width:1px;height:374px;background:#d4d4d4;"></div>
<div class="a " style="left:809px;top:208px;width:1px;height:19px;background:linear-gradient(#dadada,#a0a0a0)"></div>
<div class="a " style="left:809px;top:228px;width:1px;height:374px;background:#d4d4d4;"></div>
<div class="a " style="left:27px;top:247px;width:831px;height:1px;background:#d4d4d4;"></div>
<div class="a " style="left:1px;top:247px;width:25px;height:1px;background:linear-gradient(90deg,#d6d6d6,#a0a0a0)"></div>
<span class="t" style="left:10.22px;top:232px;line-height:14px;font-size:12.5px;color:#262626;letter-spacing:0.000px;">1</span>
<div class="a " style="left:27px;top:272px;width:831px;height:1px;background:#d4d4d4;"></div>
<div class="a " style="left:1px;top:272px;width:25px;height:1px;background:linear-gradient(90deg,#d6d6d6,#a0a0a0)"></div>
<span class="t" style="left:10.22px;top:256px;line-height:14px;font-size:12.5px;color:#262626;letter-spacing:0.000px;">2</span>
<div class="a " style="left:27px;top:307px;width:831px;height:1px;background:#d4d4d4;"></div>
<div class="a " style="left:1px;top:307px;width:25px;height:1px;background:linear-gradient(90deg,#d6d6d6,#a0a0a0)"></div>
<span class="t" style="left:10.22px;top:289px;line-height:14px;font-size:12.5px;color:#262626;letter-spacing:0.000px;">3</span>
<div class="a " style="left:27px;top:342px;width:831px;height:1px;background:#d4d4d4;"></div>
<div class="a " style="left:1px;top:342px;width:25px;height:1px;background:linear-gradient(90deg,#d6d6d6,#a0a0a0)"></div>
<span class="t" style="left:10.22px;top:324px;line-height:14px;font-size:12.5px;color:#262626;letter-spacing:0.000px;">4</span>
<div class="a " style="left:27px;top:377px;width:831px;height:1px;background:#d4d4d4;"></div>
<div class="a " style="left:1px;top:377px;width:25px;height:1px;background:linear-gradient(90deg,#d6d6d6,#a0a0a0)"></div>
<span class="t" style="left:10.22px;top:359px;line-height:14px;font-size:12.5px;color:#262626;letter-spacing:0.000px;">5</span>
<div class="a " style="left:27px;top:412px;width:831px;height:1px;background:#d4d4d4;"></div>
<div class="a " style="left:1px;top:412px;width:25px;height:1px;background:linear-gradient(90deg,#d6d6d6,#a0a0a0)"></div>
<span class="t" style="left:10.22px;top:394px;line-height:14px;font-size:12.5px;color:#262626;letter-spacing:0.000px;">6</span>
<div class="a " style="left:27px;top:432px;width:831px;height:1px;background:#d4d4d4;"></div>
<div class="a " style="left:1px;top:432px;width:25px;height:1px;background:linear-gradient(90deg,#d6d6d6,#a0a0a0)"></div>
<span class="t" style="left:10.22px;top:417px;line-height:14px;font-size:12.5px;color:#262626;letter-spacing:0.000px;">7</span>
<div class="a " style="left:27px;top:452px;width:831px;height:1px;background:#d4d4d4;"></div>
<div class="a " style="left:1px;top:452px;width:25px;height:1px;background:linear-gradient(90deg,#d6d6d6,#a0a0a0)"></div>
<span class="t" style="left:10.22px;top:437px;line-height:14px;font-size:12.5px;color:#262626;letter-spacing:0.000px;">8</span>
<div class="a " style="left:27px;top:472px;width:831px;height:1px;background:#d4d4d4;"></div>
<div class="a " style="left:1px;top:472px;width:25px;height:1px;background:linear-gradient(90deg,#d6d6d6,#a0a0a0)"></div>
<span class="t" style="left:10.22px;top:457px;line-height:14px;font-size:12.5px;color:#262626;letter-spacing:0.000px;">9</span>
<div class="a " style="left:27px;top:492px;width:831px;height:1px;background:#d4d4d4;"></div>
<div class="a " style="left:1px;top:492px;width:25px;height:1px;background:linear-gradient(90deg,#d6d6d6,#a0a0a0)"></div>
<span class="t" style="left:7.80px;top:477px;line-height:14px;font-size:12.5px;color:#262626;letter-spacing:-1.502px;">10</span>
<div class="a " style="left:27px;top:512px;width:831px;height:1px;background:#d4d4d4;"></div>
<div class="a " style="left:1px;top:512px;width:25px;height:1px;background:linear-gradient(90deg,#d6d6d6,#a0a0a0)"></div>
<span class="t" style="left:7.80px;top:497px;line-height:14px;font-size:12.5px;color:#262626;letter-spacing:-0.575px;">11</span>
<div class="a " style="left:27px;top:532px;width:831px;height:1px;background:#d4d4d4;"></div>
<div class="a " style="left:1px;top:532px;width:25px;height:1px;background:linear-gradient(90deg,#d6d6d6,#a0a0a0)"></div>
<span class="t" style="left:7.80px;top:517px;line-height:14px;font-size:12.5px;color:#262626;letter-spacing:-1.502px;">12</span>
<div class="a " style="left:27px;top:552px;width:831px;height:1px;background:#d4d4d4;"></div>
<div class="a " style="left:1px;top:552px;width:25px;height:1px;background:linear-gradient(90deg,#d6d6d6,#a0a0a0)"></div>
<span class="t" style="left:7.80px;top:537px;line-height:14px;font-size:12.5px;color:#262626;letter-spacing:-1.502px;">13</span>
<div class="a " style="left:27px;top:572px;width:831px;height:1px;background:#d4d4d4;"></div>
<div class="a " style="left:1px;top:572px;width:25px;height:1px;background:linear-gradient(90deg,#d6d6d6,#a0a0a0)"></div>
<span class="t" style="left:7.80px;top:557px;line-height:14px;font-size:12.5px;color:#262626;letter-spacing:-1.502px;">14</span>
<div class="a " style="left:27px;top:592px;width:831px;height:1px;background:#d4d4d4;"></div>
<div class="a " style="left:1px;top:592px;width:25px;height:1px;background:linear-gradient(90deg,#d6d6d6,#a0a0a0)"></div>
<span class="t" style="left:7.80px;top:577px;line-height:14px;font-size:12.5px;color:#262626;letter-spacing:-1.502px;">15</span>
<span class="t" style="left:7.80px;top:597px;line-height:14px;font-size:12.5px;color:#262626;letter-spacing:-1.502px;">16</span>
<div class="a " style="left:858px;top:208px;width:1px;height:394px;background:#9d9d9d;"></div>
<div class="a " style="left:337px;top:247px;width:409px;height:1px;background:#111;"></div>
<div class="a " style="left:337px;top:272px;width:409px;height:1px;background:#111;"></div>
<div class="a " style="left:337px;top:247px;width:1px;height:26px;background:#111;"></div>
<div class="a " style="left:408px;top:247px;width:1px;height:26px;background:#111;"></div>
<div class="a " style="left:553px;top:247px;width:1px;height:26px;background:#111;"></div>
<div class="a " style="left:617px;top:247px;width:1px;height:26px;background:#111;"></div>
<div class="a " style="left:681px;top:247px;width:1px;height:26px;background:#111;"></div>
<div class="a " style="left:745px;top:247px;width:1px;height:26px;background:#111;"></div>
<span class="t" style="left:342.00px;top:252px;line-height:19px;font-size:17px;color:#000;letter-spacing:0.249px;">Nomor</span>
<span class="t" style="left:412.40px;top:252px;line-height:19px;font-size:17px;color:#000;letter-spacing:-0.183px;">Nama lengkap</span>
<span class="t" style="left:558.00px;top:252px;line-height:19px;font-size:17px;color:#000;letter-spacing:-0.768px;">No HP</span>
<div class="a" style="left:618px;top:248px;width:63px;height:24px;overflow:hidden">
<span class="t" style="left:3.50px;top:4px;line-height:19px;font-size:17px;color:#000;letter-spacing:0.322px;">Tempat,</span>
</div>
<span class="t" style="left:686.00px;top:252px;line-height:19px;font-size:17px;color:#000;letter-spacing:-0.181px;">Alamat</span>
<span class="t" style="left:390.50px;top:279px;line-height:26px;font-size:23.5px;color:#000;letter-spacing:0.000px;">1</span>
<span class="t" style="left:390.50px;top:314px;line-height:26px;font-size:23.5px;color:#000;letter-spacing:0.000px;">2</span>
<span class="t" style="left:390.50px;top:349px;line-height:26px;font-size:23.5px;color:#000;letter-spacing:0.000px;">3</span>
<span class="t" style="left:390.50px;top:384px;line-height:26px;font-size:23.5px;color:#000;letter-spacing:0.000px;">4</span>
<svg class="a" style="left:337.3px;top:255.8px;" width="13" height="21" viewBox="0 0 13 21"><path d="M0.7 0.7V17.2L4.5 13.7 7.3 19.8 9.7 18.8 7.1 12.8 12.2 12.8z" fill="#fff" stroke="#000" stroke-width="1"/></svg>
<div class="a " style="left:859px;top:208px;width:21px;height:394px;background:#e6e6e6;"></div>
<div class="a " style="left:862px;top:210px;width:15px;height:15px;background:#fff;border:1px solid #868686"></div>
<svg class="a" style="left:866px;top:215px;" width="8" height="5" viewBox="0 0 8 5"><path d="M0 4.5h7.4L3.7 0.4z" fill="#777"/></svg>
<div class="a " style="left:862px;top:225px;width:15px;height:148px;background:#fff;border:1px solid #6e6e6e"></div>
<div class="a " style="left:862px;top:373px;width:15px;height:215px;background:#d6d6d6;"></div>
<div class="a " style="left:862px;top:588px;width:15px;height:15px;background:#fff;border:1px solid #868686"></div>
<svg class="a" style="left:866px;top:593px;" width="8" height="5" viewBox="0 0 8 5"><path d="M0 0.4h7.4L3.7 4.5z" fill="#777"/></svg>
<div class="a " style="left:1px;top:602px;width:879px;height:28px;background:#e6e6e6;"></div>
<div class="a " style="left:1px;top:602px;width:100px;height:1px;background:#9d9d9d;"></div>
<div class="a " style="left:166px;top:602px;width:693px;height:1px;background:#9d9d9d;"></div>
<div class="a " style="left:101px;top:602px;width:65px;height:25px;background:#fff;border-left:1px solid #b0b0b0;border-right:1px solid #b0b0b0"></div>
<div class="a " style="left:101px;top:624px;width:65px;height:2px;background:#217346;"></div>
<span class="t" style="left:112.50px;top:609px;line-height:14px;font-size:12.5px;color:#217346;letter-spacing:-0.098px;font-weight:bold;">Sheet1</span>
<svg class="a" style="left:27px;top:612px;" width="6" height="8" viewBox="0 0 6 8"><path d="M5.2 0.3v7L0.5 3.8z" fill="#c0c0c0"/></svg>
<svg class="a" style="left:56px;top:612px;" width="6" height="8" viewBox="0 0 6 8"><path d="M0.5 0.3v7l4.7-3.5z" fill="#c0c0c0"/></svg>
<svg class="a" style="left:199px;top:608px;" width="16" height="16" viewBox="0 0 16 16"><circle cx="8" cy="8" r="7.3" fill="none" stroke="#707070" stroke-width="1.1"/><path d="M8 4v8M4 8h8" stroke="#666" stroke-width="1.3"/></svg>
<div class="a " style="left:528px;top:611px;width:2px;height:2px;background:#ababab;"></div>
<div class="a " style="left:528px;top:615px;width:2px;height:2px;background:#ababab;"></div>
<div class="a " style="left:528px;top:619px;width:2px;height:2px;background:#ababab;"></div>
<div class="a " style="left:545px;top:609px;width:15px;height:15px;background:#fff;border:1px solid #868686"></div>
<svg class="a" style="left:549px;top:612px;" width="6" height="9" viewBox="0 0 6 9"><path d="M5.2 0.6v7.6L0.8 4.4z" fill="#666"/></svg>
<div class="a " style="left:560px;top:609px;width:255px;height:15px;background:#fff;border:1px solid #6e6e6e"></div>
<div class="a " style="left:815px;top:609px;width:29px;height:15px;background:#d6d6d6;"></div>
<div class="a " style="left:844px;top:609px;width:15px;height:15px;background:#fff;border:1px solid #868686"></div>
<svg class="a" style="left:849px;top:612px;" width="6" height="9" viewBox="0 0 6 9"><path d="M0.8 0.6v7.6l4.4-3.8z" fill="#666"/></svg>
<div class="a " style="left:1px;top:630px;width:879px;height:22px;background:#f3f2f1;border-top:1px solid #cfcfcf"></div>
<span class="t" style="left:9.50px;top:635px;line-height:12px;font-size:11.5px;color:#555;letter-spacing:-0.810px;">Ready</span>
<span class="t" style="left:108.00px;top:635px;line-height:12px;font-size:11.5px;color:#444;letter-spacing:0.045px;">Accessibility: Good to go</span>
<div class="a " style="left:569px;top:631px;width:40px;height:21px;background:#cfcfcf;"></div>
<svg class="a" style="left:59px;top:635px;" width="14" height="13" viewBox="0 0 14 13"><path d="M0.6 0.6H13.4V5M0.6 0.6V11.4H6" fill="none" stroke="#4a4a4a" stroke-width="1.2"/><path d="M0.5 2.7H13.5" stroke="#4a4a4a" stroke-width="1.1"/><path d="M2.4 5.2H5.4M2.4 7.2H4.6M2.4 9.2H4.6" stroke="#555" stroke-width="0.9"/><circle cx="9.4" cy="8.4" r="3.7" fill="#f3f2f1" stroke="#555" stroke-width="1"/><circle cx="9.4" cy="8.4" r="1.6" fill="#555"/></svg>
<svg class="a" style="left:91px;top:634px;" width="15" height="14" viewBox="0 0 15 14"><circle cx="6" cy="1.9" r="1.6" fill="none" stroke="#505050" stroke-width="1"/><path d="M0.7 3.2Q1.4 5.7 4.4 5.7H7.6Q10.6 5.7 11.3 3.2" fill="none" stroke="#505050" stroke-width="1.2"/><path d="M4.4 5.7V9.4Q4.4 12.6 2.8 13.1 1.6 13.3 1.3 12.2M7.6 5.7V8.4" fill="none" stroke="#505050" stroke-width="1.2"/><path d="M7 10.6L9.4 13 14.2 8.2" fill="none" stroke="#505050" stroke-width="1.2"/></svg>
<svg class="a" style="left:582px;top:634px;" width="13" height="13" viewBox="0 0 13 13"><path d="M0.5 0.5H12.5V12.5H0.5zM4.5 0.5V12.5M8.5 0.5V12.5M0.5 4.5H12.5M0.5 8.5H12.5" fill="none" stroke="#555" stroke-width="1.1"/></svg>
<svg class="a" style="left:622px;top:634px;" width="14" height="13" viewBox="0 0 14 13"><path d="M0.5 0.5H13.5V12.5H0.5z" fill="none" stroke="#555" stroke-width="1.1"/><path d="M3.5 2.5H10.5V10.5H3.5z" fill="none" stroke="#555" stroke-width="1"/><path d="M5 4.6H9M5 6.5H9M5 8.4H9" stroke="#555" stroke-width="0.9"/></svg>
<svg class="a" style="left:662px;top:634px;" width="14" height="13" viewBox="0 0 14 13"><path d="M0.5 0.5H13.5V12.5H0.5z" fill="none" stroke="#555" stroke-width="1.1"/><path d="M4.5 0.5V7.5H9.5V0.5M7 0.5V7.5" fill="none" stroke="#555" stroke-width="1"/></svg>
<div class="a " style="left:695px;top:640px;width:8px;height:1px;background:#555;"></div>
<div class="a " style="left:708px;top:640px;width:100px;height:1px;background:#6e6e6e;"></div>
<div class="a " style="left:756px;top:636px;width:5px;height:11px;background:#767676;"></div>
<div class="a " style="left:813px;top:640px;width:8px;height:1px;background:#555;"></div>
<div class="a " style="left:816.5px;top:636.5px;width:1px;height:8px;background:#555;"></div>
<span class="t" style="left:835.00px;top:635px;line-height:12px;font-size:11.5px;color:#555;letter-spacing:-1.137px;">100%</span>
<div class="a " style="left:0px;top:0px;width:881px;height:653px;border:1px solid #8c8c8c;border-top-color:#9a9a9a;pointer-events:none"></div>
</body></html>
